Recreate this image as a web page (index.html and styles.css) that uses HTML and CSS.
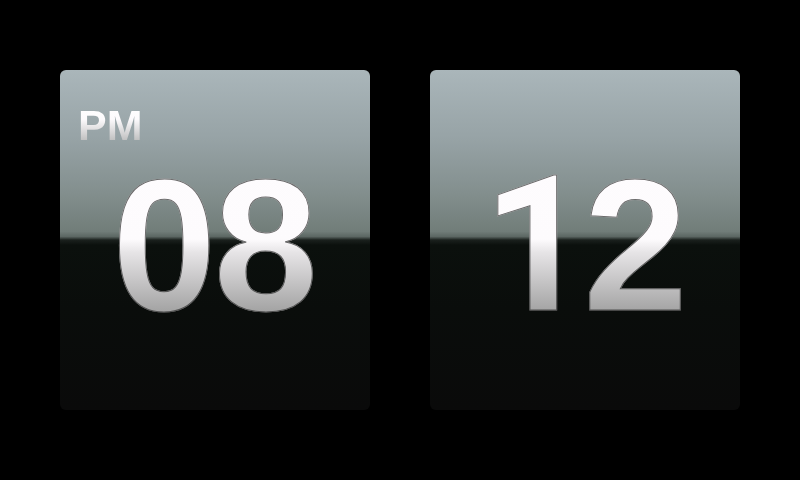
FILE: index.html
```html
<!DOCTYPE html>
<html>
<head>
<meta charset="utf-8">
<link rel="stylesheet" href="styles.css">
</head>
<body>
<main class="clock">
  <section class="card">
    <div class="ampm">PM</div>
    <div class="digits">08</div>
  </section>
  <section class="card">
    <div class="ampm"></div>
    <div class="digits"><span class="one">1</span>2</div>
  </section>
</main>
</body>
</html>
```

FILE: styles.css
```css
html, body {
  margin: 0;
  padding: 0;
  background: #000;
  width: 800px;
  height: 480px;
  overflow: hidden;
}

.clock {
  display: flex;
  gap: 60px;
  padding: 70px 0 0 60px;
}

.card {
  width: 310px;
  height: 340px;
  box-sizing: border-box;
  border-radius: 6px;
  padding: 34px 0 0 18px;
  display: flex;
  flex-direction: column;
  background: linear-gradient(to bottom,
    #aab6ba 0%,
    #97a3a6 20%,
    #838f8e 36%,
    #717d79 47.5%,
    #5c6763 49%,
    #1a201d 50%,
    #0b100d 51.5%,
    #0a0d0b 70%,
    #0a0a0a 100%);
  font-family: "Liberation Sans", Arial, sans-serif;
  font-weight: bold;
}

.ampm {
  height: 43px;
  font-size: 43px;
  line-height: 43px;
  background: linear-gradient(to bottom, #ffffff 0%, #fdfbfd 35%, #bcbcbc 88%);
  -webkit-background-clip: text;
  background-clip: text;
  -webkit-text-fill-color: transparent;
  color: transparent;
}

.digits {
  margin-left: -18px;
  margin-top: 4px;
  padding-right: 3px;
  text-align: center;
  font-size: 188px;
  line-height: 188px;
  height: 188px;
  letter-spacing: -3px;
  background: linear-gradient(to bottom, #fefcfe 0%, #fdfbfd 47%, #e6e4e6 54%, #a4a4a4 85%);
  -webkit-background-clip: text;
  background-clip: text;
  -webkit-text-fill-color: transparent;
  color: transparent;
  -webkit-text-stroke: 1px rgba(45, 45, 45, 0.7);
}

.one {
  font-family: Roboto, "Liberation Sans", sans-serif;
  font-size: 190px;
  letter-spacing: -8px;
}
```
